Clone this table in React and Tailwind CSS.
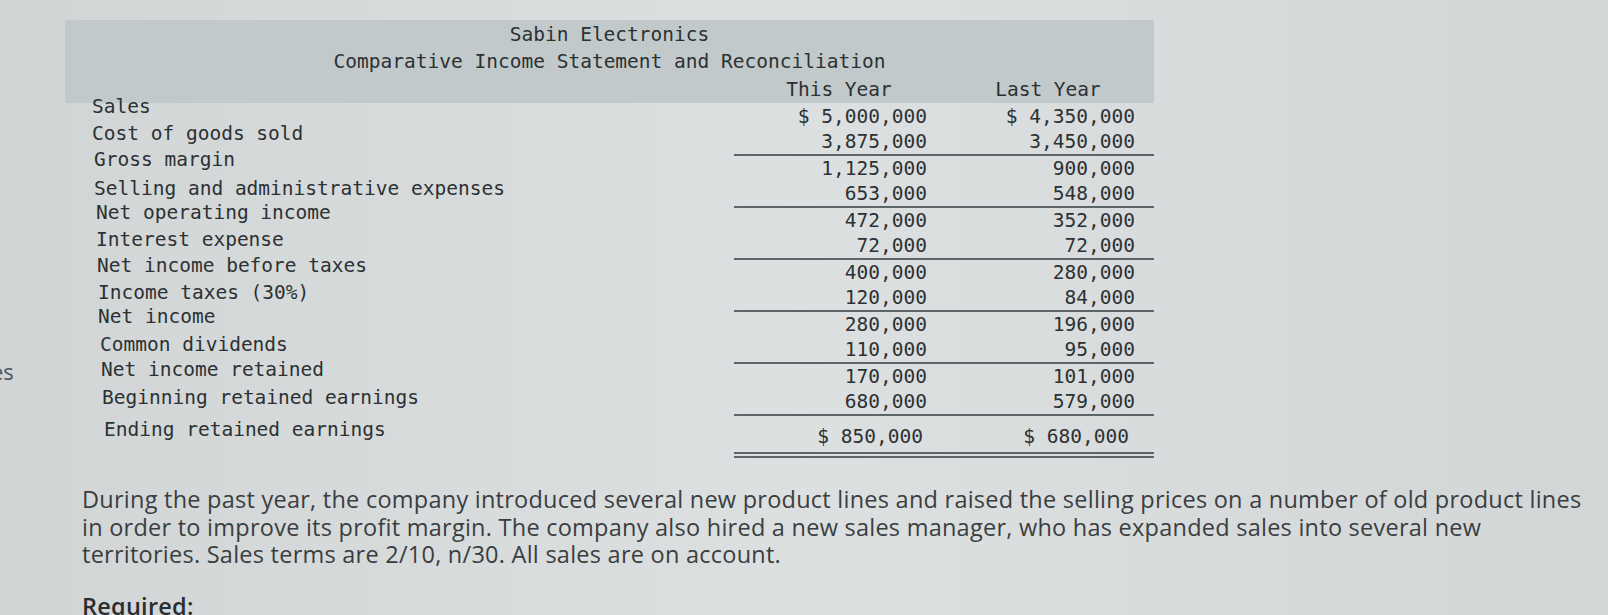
import React from "react";

const rows = [
  { label: "Sales", a: "$ 5,000,000", b: "$ 4,350,000", pl: "pl-[27px]", pb: "pb-[20px]", line: false },
  { label: "Cost of goods sold", a: "3,875,000", b: "3,450,000", pl: "pl-[27px]", pb: "pb-[18px]", line: true },
  { label: "Gross margin", a: "1,125,000", b: "900,000", pl: "pl-[29px]", pb: "pb-[18px]", line: false },
  { label: "Selling and administrative expenses", a: "653,000", b: "548,000", pl: "pl-[29px]", pb: "pb-[12px]", line: true },
  { label: "Net operating income", a: "472,000", b: "352,000", pl: "pl-[31px]", pb: "pb-[16px]", line: false },
  { label: "Interest expense", a: "72,000", b: "72,000", pl: "pl-[31px]", pb: "pb-[14px]", line: true },
  { label: "Net income before taxes", a: "400,000", b: "280,000", pl: "pl-[32px]", pb: "pb-[14px]", line: false },
  { label: "Income taxes (30%)", a: "120,000", b: "84,000", pl: "pl-[33px]", pb: "pb-[12px]", line: true },
  { label: "Net income", a: "280,000", b: "196,000", pl: "pl-[33px]", pb: "pb-[16px]", line: false },
  { label: "Common dividends", a: "110,000", b: "95,000", pl: "pl-[35px]", pb: "pb-[12px]", line: true },
  { label: "Net income retained", a: "170,000", b: "101,000", pl: "pl-[36px]", pb: "pb-[14px]", line: false },
  { label: "Beginning retained earnings", a: "680,000", b: "579,000", pl: "pl-[37px]", pb: "pb-[10px]", line: true },
];

const mono = { fontFamily: '"DejaVu Sans Mono", "Liberation Mono", monospace' };

export default function App() {
  return (
    <div className="relative w-[1608px] h-[615px] overflow-hidden bg-gradient-to-r from-[#d1d5d6] via-[#dde0e0] to-[#d2d6d7]">
      <div className="absolute left-[-9px] top-[358px] text-[22px] leading-[27px] text-[#4a5660] font-['Open_Sans',sans-serif]">
        es
      </div>

      <div className="pl-[65px] pt-[20px]">
        <div className="w-[1089px] text-[19.5px] text-[#2c3133]" style={mono}>
          {/* Header band */}
          <div className="bg-[#c2c9cb] h-[83px] pt-[1px] grid grid-cols-[669px_208px_212px] leading-[27px]">
            <div className="col-span-3 text-center">Sabin Electronics</div>
            <div className="col-span-3 text-center">Comparative Income Statement and Reconciliation</div>
            <div></div>
            <div className="text-center pl-[2px]">This Year</div>
            <div className="text-center">Last Year</div>
          </div>

          {/* Body */}
          <div className="mt-[1px]">
            {rows.map((r) => (
              <div key={r.label} className="grid grid-cols-[669px_208px_212px] items-start">
                <div className={`h-[26px] flex items-center whitespace-pre ${r.pl} ${r.pb}`}>
                  <span className="leading-[26px]">{r.label}</span>
                </div>
                <div
                  className={
                    r.line
                      ? "h-[26px] leading-[24px] text-right pr-[15px] whitespace-pre border-b-2 border-[#5b6466]"
                      : "h-[26px] leading-[26px] text-right pr-[15px] whitespace-pre"
                  }
                >
                  {r.a}
                </div>
                <div
                  className={
                    r.line
                      ? "h-[26px] leading-[24px] text-right pr-[19px] whitespace-pre border-b-2 border-[#5b6466]"
                      : "h-[26px] leading-[26px] text-right pr-[19px] whitespace-pre"
                  }
                >
                  {r.b}
                </div>
              </div>
            ))}
            <div className="grid grid-cols-[669px_208px_212px] items-start">
              <div className="h-[28px] flex items-center pl-[39px] whitespace-pre">
                <span className="leading-[26px]">Ending retained earnings</span>
              </div>
              <div className="h-[42px] pt-[8px] leading-[26px] text-right pr-[19px] whitespace-pre border-b-[6px] border-double border-[#5b6466]">
                $ 850,000
              </div>
              <div className="h-[42px] pt-[8px] leading-[26px] text-right pr-[25px] whitespace-pre border-b-[6px] border-double border-[#5b6466]">
                $ 680,000
              </div>
            </div>
          </div>
        </div>
      </div>

      <div className="pl-[82px] mt-[28px] text-[23.5px] leading-[27.5px] tracking-[0.25px] text-[#3a3e41] font-['Open_Sans',sans-serif]">
        <p>
          <span className="block whitespace-nowrap">
            During the past year, the company introduced several new product lines and raised the selling prices on a number of old product lines
          </span>
          <span className="block whitespace-nowrap">
            in order to improve its profit margin. The company also hired a new sales manager, who has expanded sales into several new
          </span>
          <span className="block whitespace-nowrap">
            territories. Sales terms are 2/10, n/30. All sales are on account.
          </span>
        </p>
        <p className="mt-[24px] font-semibold text-[#2a2d30]">Required:</p>
      </div>
    </div>
  );
}
